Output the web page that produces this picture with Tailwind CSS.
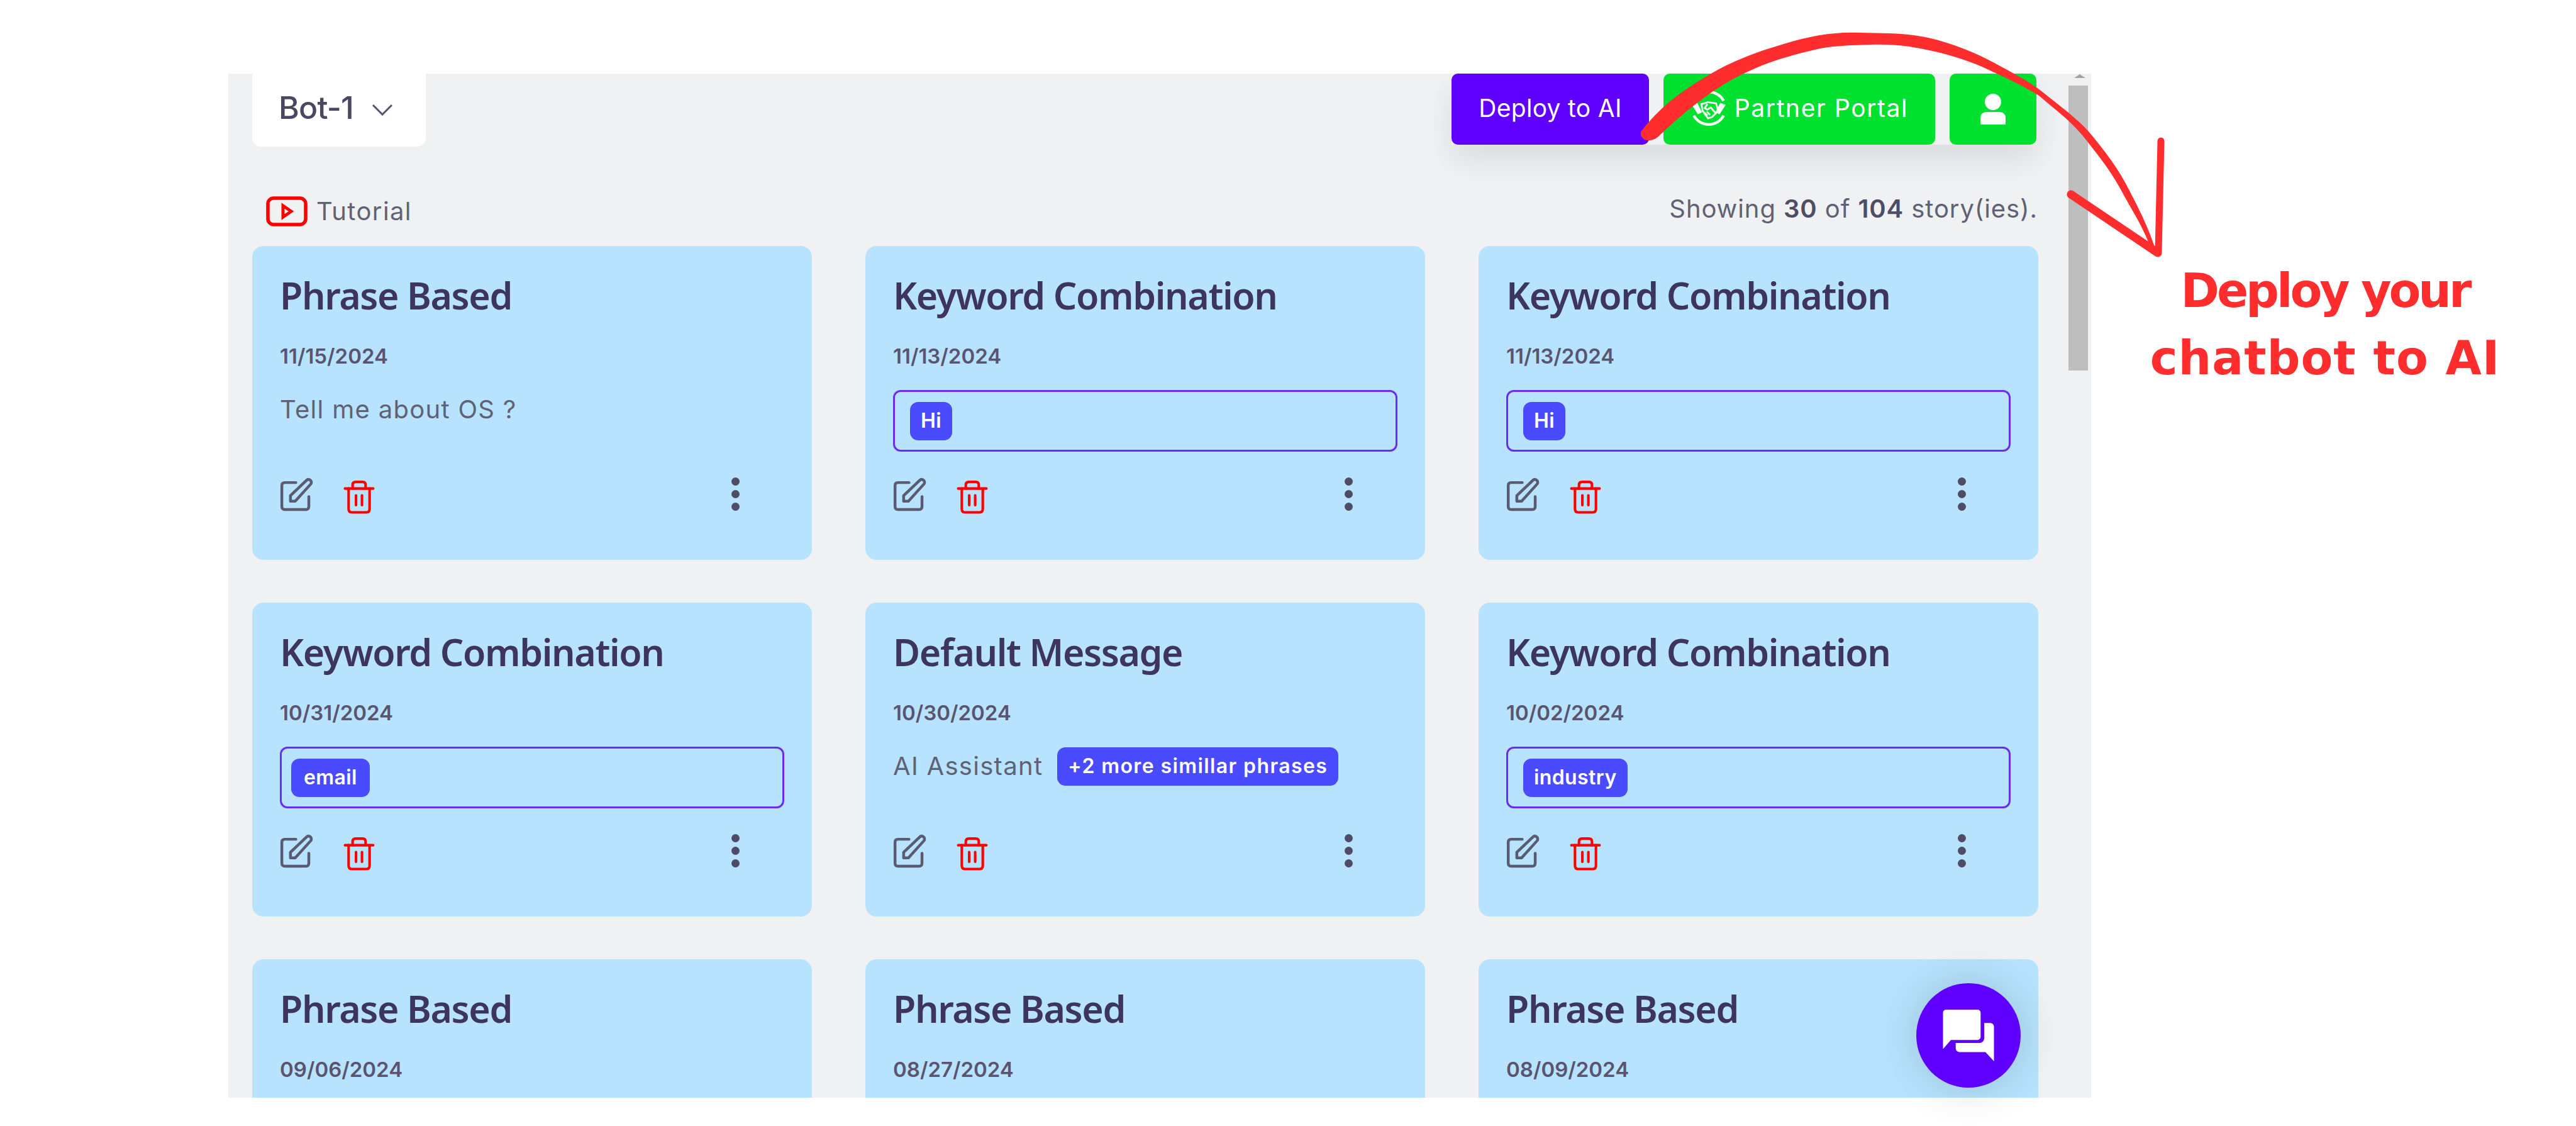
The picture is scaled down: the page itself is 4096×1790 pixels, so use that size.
<!DOCTYPE html>
<html lang="en">
  <head>
    <meta charset="UTF-8" />
    <title>Stories</title>
    <script src="https://cdn.jsdelivr.net/npm/@tailwindcss/browser@4"></script>
  </head>
  <body class="bg-white font-[Inter] text-[#5f6275] overflow-hidden">
    <div class="relative w-[4096px] h-[1790px] pt-[117px] pl-[363px] overflow-hidden">
      <div class="relative flex w-[2962px] h-[1628px] bg-[#f0f1f3] overflow-hidden">
        <div class="w-[2877px] pl-[38px] shrink-0">
          <!-- top bar -->
          <div class="flex justify-between items-start h-[113px]">
            <button class="flex items-center gap-[30px] w-[276px] h-[116px] pl-[42px] pb-[8px] bg-white rounded-b-[14px] text-[50px] font-medium tracking-[-0.8px] text-[#4b4763]">
              <span>Bot-1</span>
              <svg class="w-[32px] h-[18px] mt-[8px]" viewBox="0 0 32 18" fill="none" stroke="#55536b" stroke-width="3"><path d="M1 1l15 15L31 1" /></svg>
            </button>
            <div class="flex gap-[23px] mr-[2px] shadow-[0_24px_50px_rgba(0,0,0,0.09)]">
              <button class="w-[314px] h-[113px] pb-[3px] bg-[#5f00ff] rounded-[10px] text-white text-[39px] tracking-[0.3px]">Deploy to AI</button>
              <button class="flex items-center justify-center gap-[12px] w-[432px] h-[113px] pb-[3px] bg-[#00e02f] rounded-[10px] text-white text-[39px] tracking-[1.6px]">
                <svg class="w-[58px] h-[58px]" viewBox="0 0 54 54" fill="none" stroke="white">
                  <path d="M5 16A25 25 0 0 1 49 16M49 38A25 25 0 0 1 5 38" stroke-width="4" />
                  <path d="M2 22l8-3 7 14-6 3zM52 22l-8-3-7 14 6 3z" fill="white" stroke="none" />
                  <path d="M16 21l10-3 12 2 3 11-9 9-6 2-8-11zM25 21l-4 6 4 2 5-3 7 8M24 32l5 5M20 33l5 5" stroke-width="2.6" />
                </svg>
                <span>Partner Portal</span>
              </button>
              <button class="flex items-center justify-center w-[138px] h-[113px] bg-[#00e02f] rounded-[10px]">
                <svg class="w-[42px] h-[50px]" viewBox="0 0 42 50" fill="white"><circle cx="21" cy="13" r="13" /><path d="M1 49V38c0-6 5-9 10-9h20c5 0 10 3 10 9v11z" /></svg>
              </button>
            </div>
          </div>
          <!-- tutorial / count -->
          <div class="flex justify-between items-center h-[161px] pt-[43px]">
            <div class="flex items-center gap-[14px] pl-[22px] pt-[8px]">
              <svg class="w-[66px] h-[48px]" viewBox="0 0 66 48" fill="none" stroke="#ff0000"><rect x="3" y="3" width="60" height="42" rx="9" stroke-width="5.5" /><path d="M27 15l13 9-13 9z" stroke-width="5" /></svg>
              <span class="text-[40px] tracking-[1.4px] text-[#5f6275]">Tutorial</span>
            </div>
            <div class="text-[40px] tracking-[0.9px] text-[#5f6275]">Showing <b class="font-semibold text-[#4f4d66]">30</b> of <b class="font-semibold text-[#4f4d66]">104</b> story(ies).</div>
          </div>
          <div id="cards" class="grid grid-cols-[890px_890px_890px] auto-rows-[499px] gap-x-[85px] gap-y-[68px]"></div>
        </div>
        <!-- scrollbar -->
        <div class="pl-[49px] w-[85px]">
          <div class="w-0 h-0 mx-auto mt-[1px] border-x-[9px] border-b-[6px] border-x-transparent border-b-[#a3a3a3]"></div>
          <div class="w-[31px] h-[453px] mt-[12px] bg-[#bebebe]"></div>
        </div>
      </div>

      <!-- chat launcher -->
      <button class="absolute left-[3047px] top-[1563px] flex items-center justify-center w-[166px] h-[166px] rounded-full bg-[#5f00ff] shadow-[0_0_70px_rgba(0,0,0,0.16)]">
        <svg class="w-[82px] h-[82px]" viewBox="0 0 84 85" fill="white">
          <path d="M5 0h52a5 5 0 0 1 5 5v40a5 5 0 0 1-5 5H13L0 65V5a5 5 0 0 1 5-5z" />
          <path d="M68 22h10a6 6 0 0 1 6 6v57L70 70H27a6 6 0 0 1-6-6v-9h40a8 8 0 0 0 7-8z" />
        </svg>
      </button>

      <!-- annotation -->
      <svg class="absolute left-0 top-0 w-[4096px] h-[1790px] pointer-events-none" viewBox="0 0 4096 1790" fill="#ff2d2d">
        <path d="M2611 207C2640 170 2672 146 2714 121C2755 96 2795 82 2836 70C2880 56 2920 50 2959 52C2995 53 3030 52 3066 60C3105 69 3140 83 3173 101C3200 116 3225 128 3250 148C3280 172 3305 190 3326 215C3355 250 3372 275 3387 305C3405 340 3415 360 3428 398L3422 400C3408 360 3390 335 3372 301C3355 270 3335 245 3311 215C3290 190 3265 172 3242 152C3215 135 3185 122 3158 109C3125 94 3090 84 3058 78C3030 72 3000 70 2974 71C2945 72 2918 72 2890 78C2855 86 2822 95 2790 109C2760 122 2738 135 2714 152C2685 173 2660 195 2637 217C2630 224 2615 226 2611 218C2608 214 2608 210 2611 207Z" />
        <path d="M3436 224L3432 400" fill="none" stroke="#ff2d2d" stroke-width="11" stroke-linecap="round" />
        <path d="M3293 309L3431 402" fill="none" stroke="#ff2d2d" stroke-width="13" stroke-linecap="round" />
      </svg>
      <div class="absolute left-[3397px] top-[409px] w-[600px] text-center text-[#ff2d2d] font-['DejaVu_Sans'] font-bold text-[74px] leading-[107px] tracking-[1px] whitespace-nowrap">
        <div class="tracking-[-4px]">Deploy your</div>
        <div>chatbot to AI</div>
      </div>
    </div>

    <script>
      const stories = [
        { title: "Phrase Based", date: "11/15/2024", text: "Tell me about OS ?" },
        { title: "Keyword Combination", date: "11/13/2024", tag: "Hi" },
        { title: "Keyword Combination", date: "11/13/2024", tag: "Hi" },
        { title: "Keyword Combination", date: "10/31/2024", tag: "email", tight: true },
        { title: "Default Message", date: "10/30/2024", text: "AI Assistant", more: "+2 more simillar phrases" },
        { title: "Keyword Combination", date: "10/02/2024", tag: "industry" },
        { title: "Phrase Based", date: "09/06/2024" },
        { title: "Phrase Based", date: "08/27/2024" },
        { title: "Phrase Based", date: "08/09/2024" },
      ];

      const editIcon = `<svg class="w-[54px] h-[56px]" viewBox="105 90 170 175" fill="none" stroke="#5a5a70" stroke-width="14" stroke-linecap="round" stroke-linejoin="round"><path d="M185 115H130Q115 115 115 130V235Q115 250 130 250H235Q250 250 250 235V185" /><path d="M158 208V180L240 102Q250 95 260 105Q265 115 260 122L182 208Z" /></svg>`;
      const trashIcon = `<svg class="w-[50px] h-[54px] mt-[4px]" viewBox="415 100 155 170" fill="none" stroke="#ff0000" stroke-width="13" stroke-linecap="round" stroke-linejoin="round"><path d="M422 143H563" /><path d="M460 143V125Q460 110 475 110H510Q525 110 525 125V143" /><path d="M440 143V245Q440 262 455 262H530Q545 262 545 245V143" /><path d="M477 177V226M507 177V226" /></svg>`;
      const dots = `<div class="flex flex-col gap-[7px] mr-[71px]"><i class="block w-[13px] h-[13px] rounded-full bg-[#4f4d66]"></i><i class="block w-[13px] h-[13px] rounded-full bg-[#4f4d66]"></i><i class="block w-[13px] h-[13px] rounded-full bg-[#4f4d66]"></i></div>`;

      function storyBody(s) {
        if (s.tag) {
          const inset = s.tight ? "pl-[15px]" : "pl-[24px]";
          const pad = s.tight ? "px-[20px]" : "px-[17px]";
          return `<div class="flex items-center h-[98px] ${inset} border-[3px] border-[#6a2cf5] rounded-[12px]"><span class="flex items-center h-[61px] ${pad} bg-[#4a4aff] rounded-[13px] text-white text-[32px] tracking-[0.4px] font-semibold">${s.tag}</span></div>`;
        }
        if (!s.text) return "";
        const more = s.more
          ? `<span class="flex items-center h-[61px] px-[17px] bg-[#4a4aff] rounded-[13px] text-white text-[32px] tracking-[1.4px] font-semibold whitespace-nowrap">${s.more}</span>`
          : "";
        return `<div class="flex items-center gap-[23px] h-[62px] text-[40px] tracking-[1.3px] text-[#5f6275]"><span>${s.text}</span>${more}</div>`;
      }

      document.getElementById("cards").innerHTML = stories
        .map(
          (s) => `
        <div class="flex flex-col px-[44px] bg-[#b7e3fe] rounded-[18px]">
          <h2 class="h-[72px] mt-[42px] font-['Noto_Sans'] text-[59px] leading-[72px] font-semibold text-[#3d3560] tracking-[-1.4px] whitespace-nowrap">${s.title}</h2>
          <div class="h-[42px] mt-[40px] text-[33px] leading-[42px] font-semibold text-[#5a5470]">${s.date}</div>
          <div class="h-[139px] mt-[33px]">${storyBody(s)}</div>
          <div class="flex items-start justify-between">
            <div class="flex gap-[47px]">${editIcon}${trashIcon}</div>
            ${dots}
          </div>
        </div>`
        )
        .join("");
    </script>
  </body>
</html>
